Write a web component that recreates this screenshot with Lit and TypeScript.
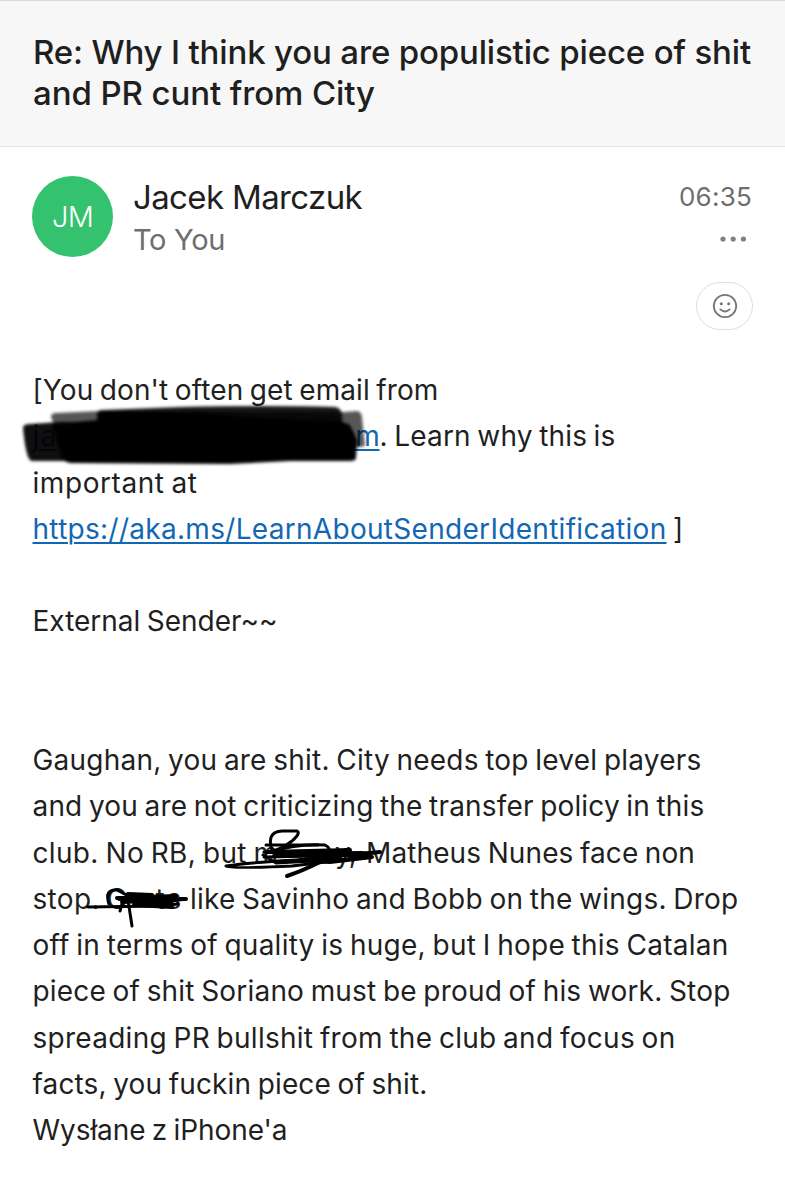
import { LitElement, html, css, svg } from "lit";
import { customElement, property } from "lit/decorators.js";

// A run of text whose tracking is adjusted so that it fills a given width.
@customElement("fit-text")
class FitText extends LitElement {
  @property({ type: Number }) width = 0;

  static styles = css`
    :host { display: inline-block; white-space: pre; }
    .run { display: inline-block; white-space: pre; }
    :host(.link) .run {
      color: #1267b4; text-decoration: underline;
      text-decoration-thickness: 2px; text-underline-offset: 3px;
    }
  `;

  firstUpdated() {
    const run = this.renderRoot.querySelector(".run") as HTMLElement;
    const count = (this.textContent || "").length;
    if (!this.width || count < 2) return;
    const natural = run.getBoundingClientRect().width;
    run.style.letterSpacing = `${(this.width - natural) / count}px`;
  }

  render() {
    return html`<span class="run"><slot></slot></span>`;
  }
}

const t = (text: string, width: number) => html`<fit-text .width=${width}>${text}</fit-text>`;
const link = (text: string, width: number) => html`<fit-text class="link" .width=${width}>${text}</fit-text>`;

@customElement("app-root")
class AppRoot extends LitElement {
  static styles = css`
    :host {
      display: block;
      background: #fff;
      color: #1f1f1f;
      font-family: Inter, "Liberation Sans", sans-serif;
    }
    .page { position: relative; height: 1200px; overflow: hidden; }
    .subject {
      box-sizing: border-box;
      height: 147px;
      padding: 31px 0 0 33px;
      background: #f7f7f7;
      border-top: 1px solid #d8d8d8;
      border-bottom: 1px solid #e4e4e4;
      font-size: 33px;
      line-height: 41px;
      font-weight: 470;
      margin: 0;
    }
    .row { display: flex; white-space: pre; }
    .sender { display: flex; height: 220px; padding: 0 32px 0 32px; box-sizing: border-box; }
    .avatar {
      width: 81px; height: 81px; margin-top: 29px; border-radius: 50%;
      background: #35c26f; color: #fff; font-size: 29px; font-weight: 350;
      display: flex; align-items: center; justify-content: center;
    }
    .names { flex: 1; padding: 29px 0 0 20px; }
    .name { font-size: 33px; line-height: 42px; }
    .to { font-size: 29px; line-height: 43px; color: #6e6e6e; }
    .side { display: flex; flex-direction: column; align-items: flex-end; padding-top: 30px; }
    .time { font-size: 26px; line-height: 40px; color: #6e6e6e; margin-right: 1px; }
    .dots { margin: 19px 6px 0 0; display: block; }
    .react {
      box-sizing: border-box; width: 57px; height: 48px; margin-top: 40px;
      border: 1px solid #dedede; border-radius: 24px;
      display: flex; align-items: center; justify-content: center;
    }
    .body { padding-left: 32.5px; font-size: 28px; word-spacing: -1.5px; }
    .line { display: flex; height: 46.28px; line-height: 46.28px; white-space: pre; }
    .ink { position: absolute; left: 0; top: 0; pointer-events: none; }
    .gap { flex: none; }
    .g-mail { width: 281px; }
    .g-first { width: 57px; }
    .g-comma { width: 10px; }
    .g-second { width: 28px; }
  `;

  ink() {
    return html`<svg class="ink" width="785" height="1200" viewBox="0 0 785 1200" fill="none" stroke="#000" stroke-linecap="round" stroke-linejoin="round">
      <defs><filter id="soft" x="-5%" y="-20%" width="110%" height="140%"><feGaussianBlur stdDeviation="1.4"/></filter></defs>
      ${svg`
      <g filter="url(#soft)" fill="#000" stroke="none">
        <path opacity=".66" d="M51 417 Q51 413 56 413 L100 411 L345 412 L357 411 Q362 412 362 418 L365 446 L345 450 L60 440Z"/>
        <path opacity=".94" d="M23 428 Q23 424 30 424 L60 422 L80 422 L80 461 L32 461 Q26 461 23 428Z"/>
        <path opacity=".9" d="M97 414 Q97 410 102 410 L180 407 Q270 405 335 407 Q341 408 342 414 L343 440 L97 440Z"/>
        <path d="M52 424 L98 420 L102 412 L200 412 Q260 420 340 421 L350 425 L357 440 L356 458 Q356 461 350 461 L290 461 L230 464 L72 463 Q66 463 62 459Z"/>
      </g>
      <g stroke-width="3">
        <path d="M272 850 Q266 832 282 831 L297 831 Q301 833 292 841 Q281 850 266 853 Q298 843 325 845 Q331 848 329 854"/>
        <path d="M266 845 L318 845 M264 852 L372 853 M264 857 L370 855 M263 855 L276 863 L350 859"/>
        <path d="M340 858 Q260 861 226 866 Q228 869 292 866 Q330 862 368 856"/>
        <path stroke-width="4" d="M268 852 L350 850 L274 856 L362 853 L300 860 L330 862 L372 857 L350 855 L380 852"/>
        <path stroke-width="4" d="M287 876 Q302 871 320 862"/>
      </g>
      <g stroke-width="3">
        <path d="M88 907 L160 906 L178 904"/>
        <path d="M109 904 Q104 889 117 890 L136 900 Q150 906 172 903"/>
        <path stroke-width="4" d="M117 898 L176 896 L122 902 L184 899 L134 905 L172 907 L128 894 L152 895 L140 900 L186 899"/>
        <path d="M128 900 L132 926 M122 904 L120 911"/>
      </g>`}
    </svg>`;
  }

  render() {
    return html`<div class="page">
      <h1 class="subject">
        <div class="row">${t("Re: Why I think you are populistic piece of shit", 718)}</div>
        <div class="row">${t("and PR cunt from City", 342)}</div>
      </h1>
      <div class="sender">
        <div class="avatar">${t("JM", 41)}</div>
        <div class="names">
          <div class="name">${t("Jacek Marczuk", 229)}</div>
          <div class="to">${t("To You", 92)}</div>
        </div>
        <div class="side">
          <div class="time">${t("06:35", 73)}</div>
          <svg class="dots" width="27" height="6" viewBox="0 0 27 6" fill="#808080"><circle cx="3" cy="3" r="2.6"/><circle cx="13.2" cy="3" r="2.6"/><circle cx="23.4" cy="3" r="2.6"/></svg>
          <div class="react">
            <svg width="26" height="26" viewBox="0 0 26 26" fill="none" stroke="#777" stroke-width="1.8" stroke-linecap="round"><circle cx="13" cy="13" r="11.2"/><path d="M8.3 16.4 Q13 20.6 17.7 16.4"/><circle cx="9.3" cy="10.7" r="1.5" fill="#777" stroke="none"/><circle cx="16.7" cy="10.7" r="1.5" fill="#777" stroke="none"/></svg>
          </div>
        </div>
      </div>
      <div class="body">
        <div class="line">${t("[You don't often get email from", 406)}</div>
        <div class="line">${link("ja", 25)}<span class="gap g-mail"></span>${link("om", 41)}${t(". Learn why this is", 236)}</div>
        <div class="line">${t("important at", 165)}</div>
        <div class="line">${link("https://aka.ms/LearnAboutSenderIdentification", 634)}${t(" ]", 17)}</div>
        <div class="line"></div>
        <div class="line">${t("External Sender~~", 245)}</div>
        <div class="line"></div>
        <div class="line"></div>
        <div class="line">${t("Gaughan, you are shit. City needs top level players", 669)}</div>
        <div class="line">${t("and you are not criticizing the transfer policy in this", 672)}</div>
        <div class="line">${t("club. No RB, but ", 221)}${t("m", 26)}<span class="gap g-first"></span>${t("y,", 21)}<span class="gap g-comma"></span>${t("Matheus Nunes face non", 329)}</div>
        <div class="line">${t("stop. ", 74)}${t("G", 22)}<span class="gap g-second"></span>${t("ts", 28)}${t(" like Savinho and Bobb on the wings. Drop", 555)}</div>
        <div class="line">${t("off in terms of quality is huge, but I hope this Catalan", 696)}</div>
        <div class="line">${t("piece of shit Soriano must be proud of his work. Stop", 698)}</div>
        <div class="line">${t("spreading PR bullshit from the club and focus on", 643)}</div>
        <div class="line">${t("facts, you fuckin piece of shit.", 395)}</div>
        <div class="line">${t("Wysłane z iPhone'a", 255)}</div>
      </div>
      ${this.ink()}
    </div>`;
  }
}
